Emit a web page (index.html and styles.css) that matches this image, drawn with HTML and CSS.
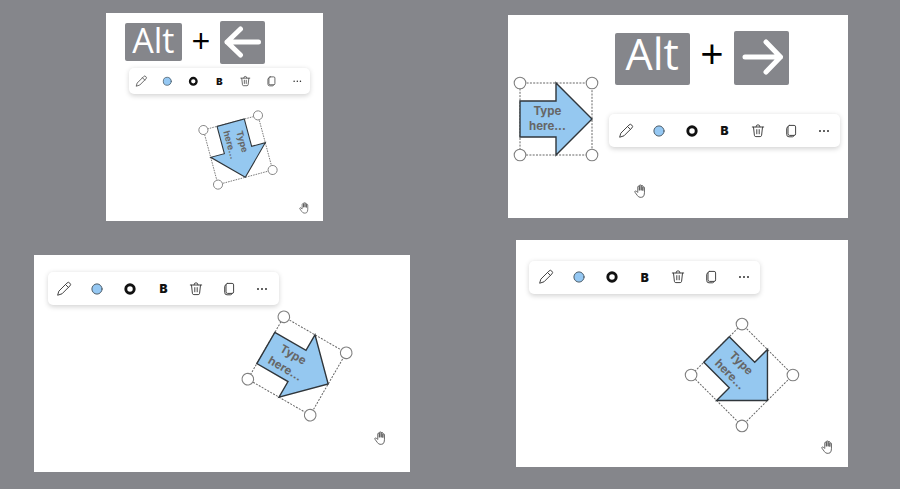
FILE: index.html
```
<!DOCTYPE html>
<html lang="en">
<head>
<meta charset="utf-8">
<title>Rotate shapes with the keyboard</title>
<link rel="stylesheet" href="styles.css">
</head>
<body>
<svg class="defs" aria-hidden="true">
  <symbol id="pencil" viewBox="0 0 16 16"><path d="M3.1 9.9 10.9 2.1a1.9 1.9 0 0 1 2.9 0 1.9 1.9 0 0 1 0 2.9L6 12.8l-4 1.3zM9.6 3.6l2.8 2.8"/></symbol>
  <symbol id="fill" viewBox="0 0 16 16"><circle class="fill-dot" cx="8" cy="8" r="5.1"/></symbol>
  <symbol id="ring" viewBox="0 0 16 16"><circle class="ring" cx="8" cy="8" r="4.2"/></symbol>
  <symbol id="trash" viewBox="0 0 16 16"><path d="M2.3 4h11.4M6 3.8a2 2 0 0 1 4 0M3.5 4.2l.9 8.1q.2 1.3 1.4 1.3h4.4q1.2 0 1.4-1.3l.9-8.1M6.8 6.6v4.2M9.2 6.6v4.2"/></symbol>
  <symbol id="copy" viewBox="0 0 16 16"><rect x="5" y="2.4" width="7.6" height="10" rx="1.5"/><path d="M4.9 3.8q-1.2.3-1.2 1.6v6.1q0 2.3 2.3 2.3h3.5q1.2 0 1.6-1.2"/></symbol>
  <symbol id="more" viewBox="0 0 16 16"><g class="dots"><circle cx="4" cy="8" r=".95"/><circle cx="8" cy="8" r=".95"/><circle cx="12" cy="8" r=".95"/></g></symbol>
  <symbol id="hand" viewBox="0 0 14 16"><path d="M4.2 9.2V3.3q0-1 .9-1t.9 1V7 2q0-1.1 1-1.1T8 2v5-4.6q0-1 .9-1t1 1V7.300 4q0-.9.9-.9t.9.9v5.700q0 2.900-1.500 4.500Q8.500 15 6.800 14.800 5 14.600 3.800 12.800L1.100 9.100q-.5-.9.200-1.300t1.500.3l1.400 1.400"/></symbol>
  <symbol id="shape" viewBox="-8 -8 88 88">
    <rect class="bounds" x="0" y="0" width="72" height="72"/>
    <path class="arrow" d="M0 18H36V0L72 36 36 72V54H0z"/>
    <g class="handles"><circle cx="0" cy="0" r="5.8"/><circle cx="72" cy="0" r="5.8"/><circle cx="0" cy="72" r="5.8"/><circle cx="72" cy="72" r="5.8"/></g>
  </symbol>
</svg>
<main class="board">
  <div class="column">
    <section class="panel panel-a">
      <div class="keys keys-small">
        <kbd class="key key-alt">Alt</kbd><span class="plus">+</span>
        <kbd class="key key-arrow"><svg viewBox="0 0 45 43"><path d="M38.500 21H7M20.500 8 7 21l13.500 13"/></svg></kbd>
      </div>
      <div class="toolbar toolbar-small">
        <span class="tool"><svg><use href="#pencil"/></svg></span><span class="tool"><svg><use href="#fill"/></svg></span><span class="tool"><svg><use href="#ring"/></svg></span><span class="tool bold">B</span><span class="tool"><svg><use href="#trash"/></svg></span><span class="tool"><svg><use href="#copy"/></svg></span><span class="tool"><svg><use href="#more"/></svg></span>
      </div>
      <div class="shape"><svg><use href="#shape"/></svg><span class="label">Type<br>here...</span></div>
      <svg class="hand"><use href="#hand"/></svg>
    </section>
    <section class="panel panel-c">
      <div class="toolbar">
        <span class="tool"><svg><use href="#pencil"/></svg></span><span class="tool"><svg><use href="#fill"/></svg></span><span class="tool"><svg><use href="#ring"/></svg></span><span class="tool bold">B</span><span class="tool"><svg><use href="#trash"/></svg></span><span class="tool"><svg><use href="#copy"/></svg></span><span class="tool"><svg><use href="#more"/></svg></span>
      </div>
      <div class="shape"><svg><use href="#shape"/></svg><span class="label">Type<br>here...</span></div>
      <svg class="hand"><use href="#hand"/></svg>
    </section>
  </div>
  <div class="column">
    <section class="panel panel-b">
      <div class="keys">
        <kbd class="key key-alt">Alt</kbd><span class="plus">+</span>
        <kbd class="key key-arrow"><svg viewBox="0 0 55 54"><path d="M11 26H46.500M32 11 46.500 26 32 41"/></svg></kbd>
      </div>
      <div class="toolbar">
        <span class="tool"><svg><use href="#pencil"/></svg></span><span class="tool"><svg><use href="#fill"/></svg></span><span class="tool"><svg><use href="#ring"/></svg></span><span class="tool bold">B</span><span class="tool"><svg><use href="#trash"/></svg></span><span class="tool"><svg><use href="#copy"/></svg></span><span class="tool"><svg><use href="#more"/></svg></span>
      </div>
      <div class="shape"><svg><use href="#shape"/></svg><span class="label">Type<br>here...</span></div>
      <svg class="hand"><use href="#hand"/></svg>
    </section>
    <section class="panel panel-d">
      <div class="toolbar">
        <span class="tool"><svg><use href="#pencil"/></svg></span><span class="tool"><svg><use href="#fill"/></svg></span><span class="tool"><svg><use href="#ring"/></svg></span><span class="tool bold">B</span><span class="tool"><svg><use href="#trash"/></svg></span><span class="tool"><svg><use href="#copy"/></svg></span><span class="tool"><svg><use href="#more"/></svg></span>
      </div>
      <div class="shape"><svg><use href="#shape"/></svg><span class="label">Type<br>here...</span></div>
      <svg class="hand"><use href="#hand"/></svg>
    </section>
  </div>
</main>
</body>
</html>
```
FILE: styles.css
```
* { box-sizing: border-box; }
body { margin: 0; background: #85868b; font-family: Inter, "Liberation Sans", sans-serif; overflow: hidden; }
.defs { position: absolute; width: 0; height: 0; }
svg { display: block; }
.board { display: grid; grid-template-columns: 450px 450px; height: 489px; }
.column { display: flex; flex-direction: column; }
.panel { position: relative; flex: none; background: #fff; }
.panel-a { width: 217px; height: 208.400px; margin: 13px 0 33.600px 106.400px; }
.panel-b { width: 340px; height: 203px; margin: 15.400px 0 21.600px 58px; }
.panel-c { width: 376px; height: 217.400px; margin-left: 34.400px; }
.panel-d { width: 331.500px; height: 227px; margin-left: 66px; }

/* Shortcut keys */
.keys { display: flex; align-items: flex-start; padding: 15.500px 0 0 106.500px; }
.key { display: flex; align-items: center; justify-content: center; background: #85868b; border-radius: 2px; color: #fff; }
.key-alt { width: 75.500px; height: 52px; margin-top: 2px; font: 400 43px/52px "Open Sans", sans-serif; padding-bottom: 9px; }
.plus { width: 44px; text-align: center; font: 400 41px/45px "Open Sans", sans-serif; color: #000; }
.key-arrow { width: 55px; height: 54px; }
.key-arrow svg { width: 100%; height: 100%; fill: none; stroke: #fff; stroke-width: 5; stroke-linecap: round; stroke-linejoin: round; }
.keys-small { padding: 7.500px 0 0 18.500px; }
.keys-small .key-alt { width: 57px; height: 37.500px; margin-top: 2.500px; font-size: 34px; line-height: 37px; padding-bottom: 3px; }
.keys-small .plus { width: 38px; font-size: 33px; line-height: 40px; }
.keys-small .key-arrow { width: 45px; height: 43px; }

/* Floating format toolbar */
.toolbar { position: absolute; display: flex; width: 231px; height: 33px; background: #fff; border-radius: 5px; box-shadow: 0 1.500px 5px rgba(0, 0, 0, .17); }
.tool { display: flex; flex: 1; align-items: center; justify-content: center; }
.tool svg { width: 16px; height: 16px; fill: none; stroke: #444; stroke-width: 1; stroke-linejoin: round; stroke-linecap: round; }
.bold { font-size: 12px; font-weight: 900; color: #111; }
.fill-dot { fill: #95c8f3; stroke: #4d5d69; }
.ring { stroke: #111; stroke-width: 2.900; }
.dots { fill: #222; stroke: none; }
.toolbar-small { width: 181.500px; height: 26px; }
.toolbar-small .tool svg { width: 12.600px; height: 12.600px; }
.toolbar-small .bold { font-size: 9.500px; }
.panel-a .toolbar { left: 22.300px; top: 55px; }
.panel-b .toolbar { left: 101px; top: 99px; }
.panel-c .toolbar { left: 13.500px; top: 17.400px; }
.panel-d .toolbar { left: 13.300px; top: 21px; }

/* Shapes placed on the canvas */
.shape { position: absolute; width: 88px; height: 88px; }
.shape svg { width: 88px; height: 88px; }
.bounds { fill: none; stroke: #666; stroke-width: 1; stroke-dasharray: 2 1.300; }
.arrow { fill: #95c8f0; stroke: #30363b; stroke-width: 1.400; }
.handles { fill: #fff; stroke: #808080; stroke-width: 1.100; }
.label { position: absolute; left: 8px; top: 29px; width: 54px; text-align: center; font-size: 11.500px; font-weight: 700; line-height: 15.500px; color: #666; }
.panel-a .shape { left: 87.900px; top: 93.300px; transform: rotate(75deg) scale(.785); }
.panel-b .shape { left: 4.400px; top: 59.600px; }
.panel-c .shape { left: 218.200px; top: 67.200px; transform: rotate(30deg); }
.panel-d .shape { left: 182.200px; top: 90.700px; transform: rotate(45deg); }

.hand { position: absolute; width: 12.500px; height: 14.500px; fill: #fff; stroke: #555; stroke-width: 1; stroke-linejoin: round; }
.panel-a .hand { left: 193px; top: 188.600px; width: 10.500px; height: 12px; }
.panel-b .hand { left: 126px; top: 169px; }
.panel-c .hand { left: 340px; top: 176.500px; }
.panel-d .hand { left: 304.500px; top: 200px; }
```
